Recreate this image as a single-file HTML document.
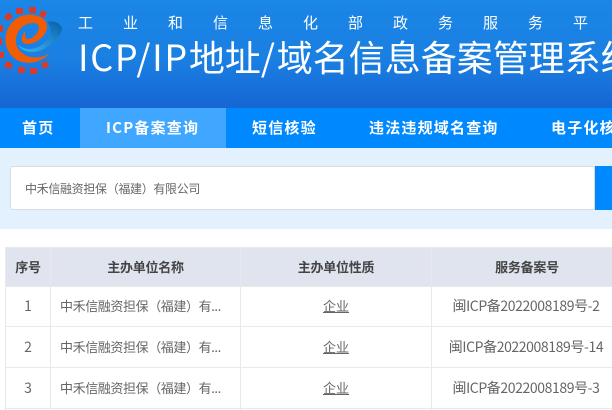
<!DOCTYPE html>
<html lang="zh"><head><meta charset="utf-8"><style>
html,body{margin:0;padding:0}
body{width:612px;height:410px;overflow:hidden;position:relative;background:#fff;font-family:"WenQuanYi Zen Hei","Noto Sans CJK SC",sans-serif;color:#666}
div,span{position:absolute;white-space:nowrap}
#hd{left:0;top:0;width:612px;height:108px;background:linear-gradient(180deg,#1a86e6 0%,#1a7fe2 55%,#1666d3 100%)}
#sub span{top:12px;font-size:15px;line-height:22px;color:#fff}
#title{left:78px;top:31px;font-size:36px;line-height:50px;color:#fff;font-weight:400}
#title b{font-weight:400;letter-spacing:1.7px}
#nav{left:0;top:108px;width:612px;height:40px;background:#0088ff}
#act{left:80px;top:0;width:146px;height:40px;background:#3fa7ff}
#nav span{top:0;line-height:40px;font-size:15px;font-weight:700;color:#fff;letter-spacing:1.2px}
#band{left:0;top:148px;width:612px;height:81px;background:#e3f1ff}
#inp{left:10px;top:18px;width:583px;height:42px;background:#fff;border:1px solid #d9dde3;border-radius:3px 0 0 3px;font-size:12px;line-height:43px;text-indent:14px;color:#666;letter-spacing:-.33px}
#btn{left:595px;top:18px;width:17px;height:44px;background:#0088ff}
.c{text-align:center;font-size:14px;line-height:20px}
.n{letter-spacing:-.4px;font-size:13px}
.s{letter-spacing:-.4px}
.h{font-weight:700;color:#444;font-size:13px;top:257px;letter-spacing:-.25px}
.bg{background:#e0e4ef}
.ln{background:#e9e9ec}
u{text-decoration:underline}
</style></head><body>
<div id="hd">
<svg width="80" height="75" viewBox="0 0 80 75" style="position:absolute;left:0;top:0;filter:blur(.35px)">
<defs><linearGradient id="b" x1="0" y1="1" x2="1" y2="0"><stop offset="0" stop-color="#3fb4ee"/><stop offset=".6" stop-color="#1d86cc"/><stop offset="1" stop-color="#0a5ca8"/></linearGradient></defs>
<g fill="#dc3a28">
<rect x="16" y="8" width="7" height="6" rx="1"/><rect x="29" y="7" width="7" height="6" rx="1"/>
<rect x="40" y="11" width="6" height="6" rx="1" transform="rotate(30 43 14)"/>
<rect x="5" y="14" width="7" height="6" rx="1" transform="rotate(-40 8 17)"/>
<rect x="-2" y="25" width="5" height="7" rx="1"/><rect x="-3" y="38" width="5" height="7" rx="1"/>
<rect x="-1" y="52" width="5" height="6" rx="1"/><rect x="5" y="62" width="7" height="6" rx="1" transform="rotate(30 8 65)"/>
<rect x="18" y="67" width="7" height="6" rx="1"/><rect x="30" y="68" width="7" height="6" rx="1"/>
<rect x="42" y="62" width="6" height="6" rx="1" transform="rotate(-30 45 65)"/>
</g>
<path d="M18 45C26 51 36 50 44 43C52 36 52 28 47 22C53 20 61 23 62 29C62 36 50 46 42 50C33 54 22 52 18 45Z" fill="url(#b)"/>
<path d="M50 53C42 62 28 66 17 60C7 54 3 42 7 31C11 20 22 13 33 15C42 16 48 21 47 28C46 36 36 44 27 44C23 44 21 41 22 37C23 34 24 32 25 31C25 35 25 39 28 39C33 39 39 32 39 27C38 21 27 22 21 28C14 36 14 47 22 53C29 59 41 59 50 53Z" fill="#f25c05"/>
</svg>
<div id="sub">
<span style="left:78px">工</span><span style="left:123px">业</span><span style="left:168px">和</span><span style="left:213px">信</span><span style="left:258px">息</span><span style="left:303px">化</span><span style="left:348px">部</span><span style="left:393px">政</span><span style="left:438px">务</span><span style="left:483px">服</span><span style="left:528px">务</span><span style="left:573px">平</span>
</div>
<div id="title"><b>ICP/IP</b>地址<b>/</b>域名信息备案管理系统</div>
</div>
<div id="nav"><div id="act"></div>
<span style="left:22px">首页</span><span style="left:106px">ICP备案查询</span><span style="left:252px">短信核验</span><span style="left:369px">违法违规域名查询</span><span style="left:551px">电子化核验</span>
</div>
<div id="band"><div id="inp">中禾信融资担保（福建）有限公司</div><div id="btn"></div></div>

<div class="bg" style="left:5px;top:248px;width:607px;height:38px"></div>
<div class="ln" style="left:5px;top:247px;width:607px;height:1px"></div>
<div class="ln" style="left:5px;top:286px;width:607px;height:1px"></div>
<div class="ln" style="left:5px;top:326px;width:607px;height:1px"></div>
<div class="ln" style="left:5px;top:367px;width:607px;height:1px"></div>
<div class="ln" style="left:5px;top:408px;width:607px;height:1px"></div>
<div class="ln" style="left:5px;top:247px;width:1px;height:163px"></div>
<div class="ln" style="left:50px;top:247px;width:1px;height:163px"></div>
<div class="ln" style="left:240px;top:247px;width:1px;height:163px"></div>
<div class="ln" style="left:431px;top:247px;width:1px;height:163px"></div>

<div class="c h" style="left:6px;width:44px">序号</div>
<div class="c h" style="left:51px;width:189px">主办单位名称</div>
<div class="c h" style="left:241px;width:190px">主办单位性质</div>
<div class="c h" style="left:432px;width:190px">服务备案号</div>

<div class="c" style="left:6px;top:296px;width:44px">1</div>
<div class="c" style="left:6px;top:337px;width:44px">2</div>
<div class="c" style="left:6px;top:378px;width:44px">3</div>

<div class="c n" style="left:60px;top:296px">中禾信融资担保（福建）有...</div>
<div class="c n" style="left:60px;top:337px">中禾信融资担保（福建）有...</div>
<div class="c n" style="left:60px;top:378px">中禾信融资担保（福建）有...</div>

<div class="c" style="left:241px;top:296px;width:190px;font-size:13px"><u>企业</u></div>
<div class="c" style="left:241px;top:337px;width:190px;font-size:13px"><u>企业</u></div>
<div class="c" style="left:241px;top:378px;width:190px;font-size:13px"><u>企业</u></div>

<div class="c s" style="left:432px;top:296px;width:188px">闽ICP备2022008189号-2</div>
<div class="c s" style="left:432px;top:337px;width:188px">闽ICP备2022008189号-14</div>
<div class="c s" style="left:432px;top:378px;width:188px">闽ICP备2022008189号-3</div>
</body></html>
